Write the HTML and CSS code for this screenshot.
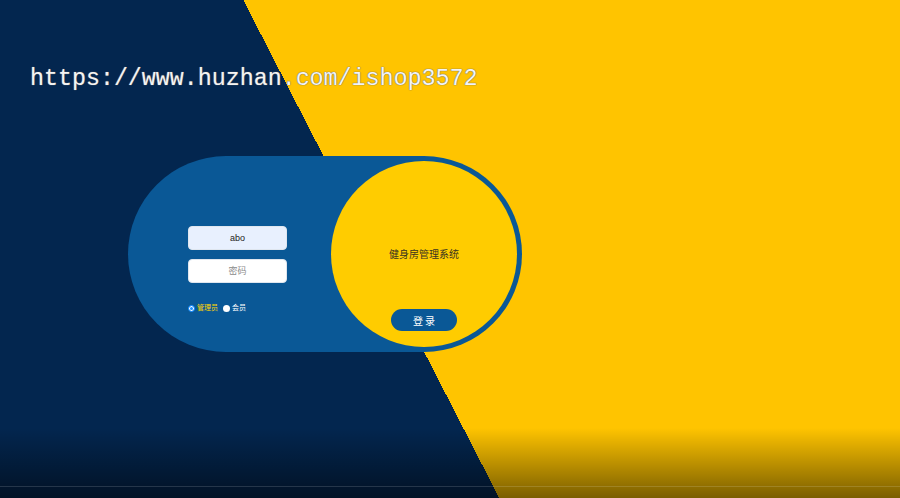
FILE: index.html
```html
<!DOCTYPE html>
<html lang="zh-CN">
<head>
  <meta charset="UTF-8">
  <meta name="viewport" content="width=device-width, initial-scale=1.0">
  <title>健身房管理系统</title>
  <link rel="stylesheet" href="styles.css">
</head>
<body>
  <div class="watermark">https://www.huzhan.com/ishop3572</div>
  <div class="login-box">
    <div class="form-side">
      <input type="text" class="field filled" value="abo">
      <input type="password" class="field" placeholder="密码">
      <div class="roles">
        <label class="role active"><span class="dot checked"></span>管理员</label>
        <label class="role"><span class="dot"></span>会员</label>
      </div>
    </div>
    <div class="circle">
      <div class="title">健身房管理系统</div>
      <button class="login-btn">登 录</button>
    </div>
  </div>
  <div class="bottom-line"></div>
</body>
</html>
```

FILE: styles.css
```css
html, body {
  margin: 0;
  padding: 0;
  height: 100%;
}
body {
  width: 900px;
  height: 498px;
  overflow: hidden;
  font-family: "Liberation Sans", "Noto Sans CJK SC", sans-serif;
  background:
    linear-gradient(to bottom, rgba(0, 0, 0, 0) 428px, rgba(0, 0, 0, 0.52) 498px),
    linear-gradient(62.8deg, #03264f 444px, #ffc400 444px);
}
.watermark {
  padding: 62px 0 0 30px;
  height: 34px;
  font-family: "Liberation Mono", monospace;
  font-size: 23.3px;
  line-height: 34px;
  color: #f4f4f4;
  text-shadow: 0 0 1px #666, 0 0 1px #666;
}
.login-box {
  margin: 60px 0 0 128px;
  width: 384px;
  height: 186px;
  padding: 5px;
  border-radius: 98px;
  background: #0a5896;
  display: flex;
  justify-content: space-between;
}
.form-side {
  padding: 65px 0 0 55px;
  display: flex;
  flex-direction: column;
}
.field {
  box-sizing: border-box;
  width: 99px;
  height: 24px;
  margin: 0 0 9px 0;
  border: 1px solid #dfe6ef;
  border-radius: 4px;
  background: #fff;
  font-family: "Liberation Sans", "Noto Sans CJK SC", sans-serif;
  font-size: 9px;
  color: #222;
  text-align: center;
  outline: none;
}
.field::placeholder {
  color: #8a8a8a;
}
.field.filled {
  background: #e8f0fe;
}
.roles {
  margin-top: 11px;
  display: flex;
  gap: 5px;
  font-size: 7px;
  line-height: 10px;
}
.role {
  display: flex;
  align-items: center;
  gap: 2px;
  color: #fff;
}
.role.active {
  color: #ffd400;
}
.dot {
  box-sizing: border-box;
  width: 7px;
  height: 7px;
  border-radius: 50%;
  background: #fff;
}
.dot.checked {
  border: 1.5px solid #1e90ff;
  box-shadow: inset 0 0 0 1px #fff;
  background: #1e90ff;
}
.circle {
  width: 186px;
  height: 186px;
  border-radius: 50%;
  background: #ffcc00;
  display: flex;
  flex-direction: column;
  align-items: center;
}
.title {
  margin-top: 87px;
  font-family: "Noto Sans CJK SC", sans-serif;
  font-size: 10px;
  line-height: 12px;
  color: #3a3320;
}
.login-btn {
  margin-top: 49px;
  width: 66px;
  height: 22px;
  border: none;
  border-radius: 11px;
  background: #0a5896;
  color: #fff;
  font-family: "Noto Sans CJK SC", sans-serif;
  font-size: 10px;
  cursor: pointer;
}
.bottom-line {
  margin-top: 134px;
  height: 1px;
  background: rgba(255, 255, 255, 0.14);
}
```
